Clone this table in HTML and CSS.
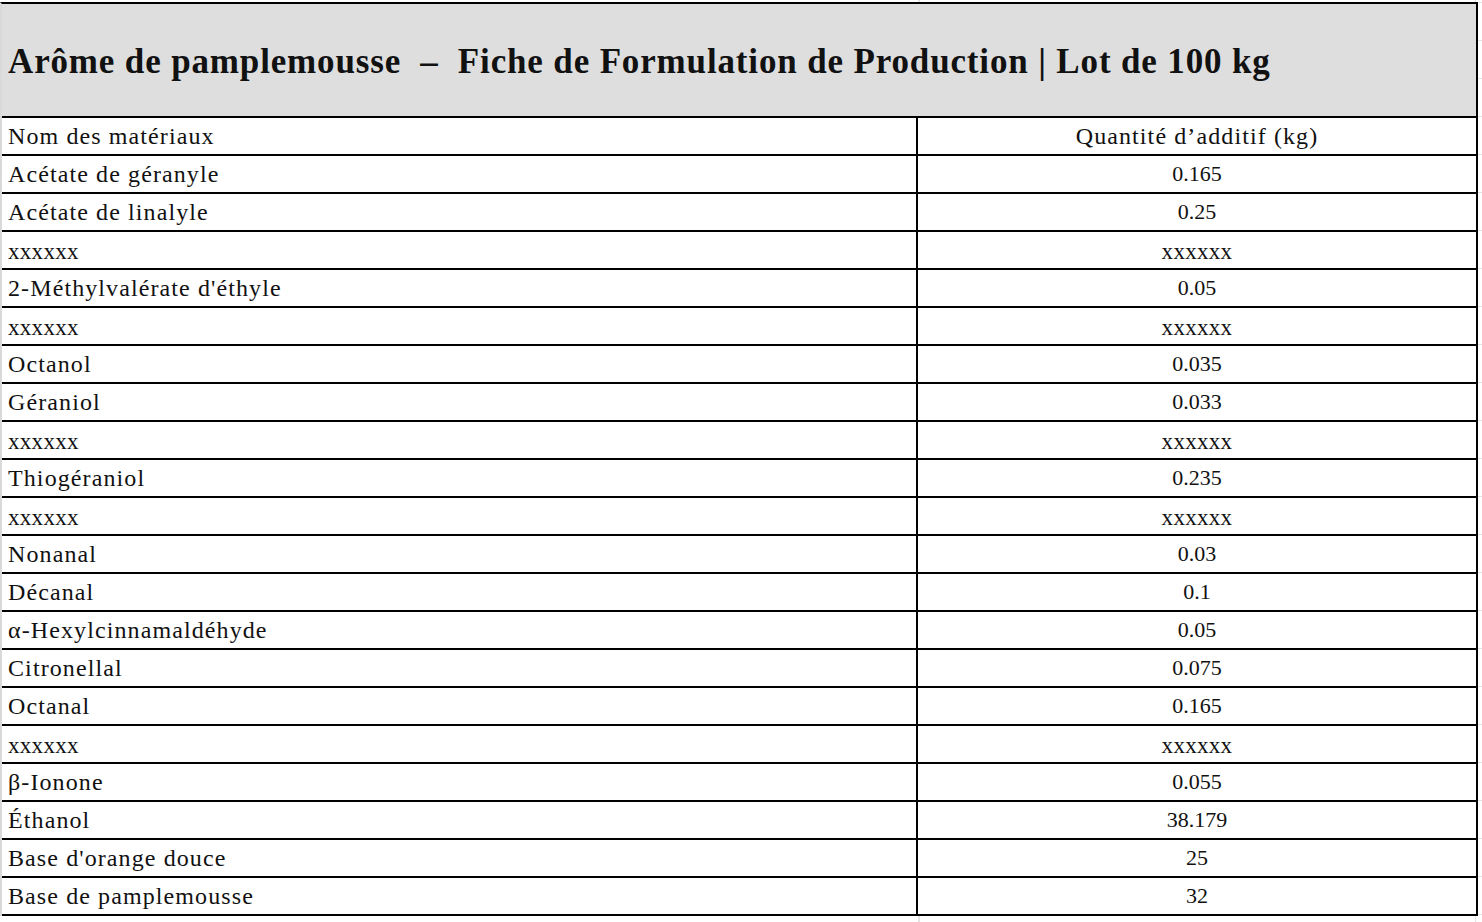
FILE: index.html
```html
<!DOCTYPE html>
<html lang="fr">
<head>
<meta charset="utf-8">
<title>Arôme de pamplemousse</title>
<link rel="stylesheet" href="styles.css">
</head>
<body>
<div class="sheet">
  <div class="title">Arôme de pamplemousse&nbsp; –&nbsp; Fiche de Formulation de Production | Lot de 100 kg</div>
  <div class="row"><div class="name">Nom des matériaux</div><div class="qty label">Quantité d’additif (kg)</div></div>
  <div class="row"><div class="name">Acétate de géranyle</div><div class="qty">0.165</div></div>
  <div class="row"><div class="name">Acétate de linalyle</div><div class="qty">0.25</div></div>
  <div class="row"><div class="name mask">xxxxxx</div><div class="qty mask">xxxxxx</div></div>
  <div class="row"><div class="name">2-Méthylvalérate d'éthyle</div><div class="qty">0.05</div></div>
  <div class="row"><div class="name mask">xxxxxx</div><div class="qty mask">xxxxxx</div></div>
  <div class="row"><div class="name">Octanol</div><div class="qty">0.035</div></div>
  <div class="row"><div class="name">Géraniol</div><div class="qty">0.033</div></div>
  <div class="row"><div class="name mask">xxxxxx</div><div class="qty mask">xxxxxx</div></div>
  <div class="row"><div class="name">Thiogéraniol</div><div class="qty">0.235</div></div>
  <div class="row"><div class="name mask">xxxxxx</div><div class="qty mask">xxxxxx</div></div>
  <div class="row"><div class="name">Nonanal</div><div class="qty">0.03</div></div>
  <div class="row"><div class="name">Décanal</div><div class="qty">0.1</div></div>
  <div class="row"><div class="name">α-Hexylcinnamaldéhyde</div><div class="qty">0.05</div></div>
  <div class="row"><div class="name">Citronellal</div><div class="qty">0.075</div></div>
  <div class="row"><div class="name">Octanal</div><div class="qty">0.165</div></div>
  <div class="row"><div class="name mask">xxxxxx</div><div class="qty mask">xxxxxx</div></div>
  <div class="row"><div class="name">β-Ionone</div><div class="qty">0.055</div></div>
  <div class="row"><div class="name">Éthanol</div><div class="qty">38.179</div></div>
  <div class="row"><div class="name">Base d'orange douce</div><div class="qty">25</div></div>
  <div class="row"><div class="name">Base de pamplemousse</div><div class="qty">32</div></div>
</div>
</body>
</html>
```
FILE: styles.css
```css
html, body {
  margin: 0;
  padding: 0;
}
body {
  background-color: #ffffff;
  background-image:
    linear-gradient(to right, transparent 918px, #e4e4e4 918px, #e4e4e4 920px, transparent 920px, transparent 1475px, #e4e4e4 1475px, #e4e4e4 1476px, transparent 1476px),
    repeating-linear-gradient(to bottom, #e4e4e4 0, #e4e4e4 1px, transparent 1px, transparent 38px);
  background-position: 0 0, 0 2px;
  width: 1482px;
  height: 922px;
  overflow: hidden;
  font-family: "Liberation Serif", "Times New Roman", serif;
  color: #111;
}
.sheet {
  margin-top: 2px;
  width: 1474px;
  border-top: 2px solid #000;
  border-right: 2px solid #000;
  border-left: 2px solid #d9d9d9;
  background: #fff;
}
.title {
  height: 114px;
  box-sizing: border-box;
  background: #dedede;
  border-bottom: 2px solid #000;
  padding: 4px 0 0 6px;
  display: flex;
  align-items: center;
  font-weight: bold;
  font-size: 35px;
  letter-spacing: 0.85px;
  white-space: nowrap;
  color: #111;
}
.row {
  display: grid;
  grid-template-columns: 916px 1fr;
  height: 38px;
  box-sizing: border-box;
  border-bottom: 2px solid #000;
}
.name, .qty {
  font-size: 24px;
  line-height: 36px;
  padding-top: 0;
  box-sizing: border-box;
  white-space: nowrap;
  overflow: hidden;
}
.name {
  padding-left: 6px;
  border-right: 2px solid #000;
  letter-spacing: 1.1px;
}
.qty {
  text-align: center;
  font-size: 22px;
}
.qty.label {
  font-size: 24px;
  letter-spacing: 1.1px;
}
.name.mask, .qty.mask {
  font-size: 23px;
  letter-spacing: 0.3px;
  padding-top: 2px;
}
```
